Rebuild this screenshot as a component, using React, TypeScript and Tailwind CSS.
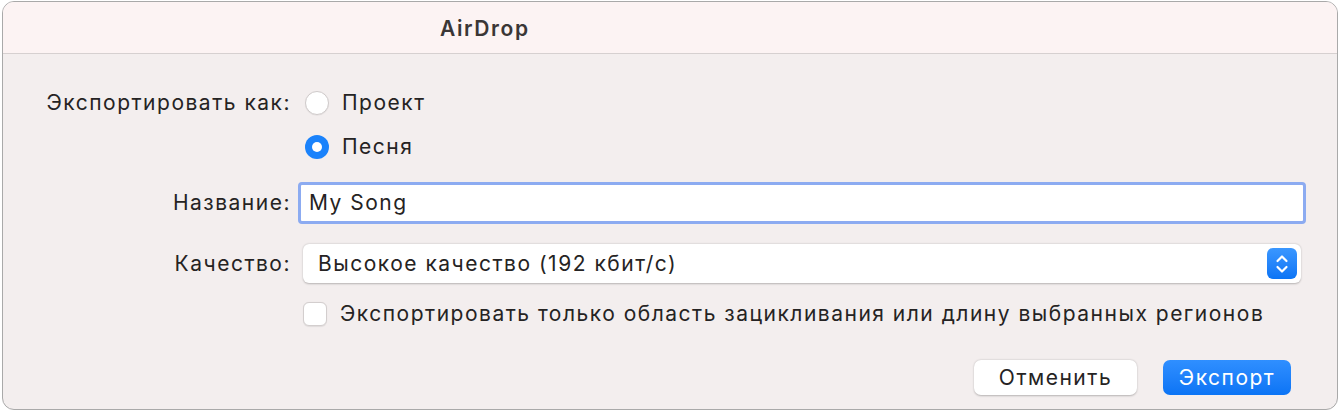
import React from "react";

export default function App() {
  const font = { fontFamily: "Inter, 'Noto Sans', sans-serif" };
  return (
    <div className="w-[1341px] h-[412px] bg-white pt-[1px] pl-[2px] pr-[3px] pb-[2px]" style={font}>
      <div className="w-full h-full rounded-[12px] border border-[#a9a9a9] overflow-hidden bg-[#f3eeee] flex flex-col">
        <div className="h-[52px] shrink-0 bg-[#fcf3f3] border-b border-[#d6d0d0] flex items-center pl-[437px] pt-[3px]">
          <span className="text-[21px] font-semibold text-[#3a3636] tracking-[1.6px]">AirDrop</span>
        </div>
        <div className="flex-1 flex flex-col text-[21px] tracking-[1.5px] text-[#252323]">
          <div className="grid grid-cols-[288px_1fr] items-center gap-x-[10px] mt-[37px]">
            <div className="text-right h-[24px] leading-[24px]">Экспортировать как:</div>
            <div className="flex items-center gap-[13px] pl-[4px] h-[24px]">
              <span className="w-[24px] h-[24px] rounded-full bg-white border border-[#cfcaca] shadow-[0_0.5px_1px_rgba(0,0,0,0.08)]"></span>
              <span>Проект</span>
            </div>
            <div></div>
            <div className="flex items-center gap-[13px] pl-[4px] mt-[20px] h-[24px]">
              <span className="w-[24px] h-[24px] rounded-full bg-[#1a82fb] flex items-center justify-center">
                <span className="w-[10px] h-[10px] rounded-full bg-white"></span>
              </span>
              <span>Песня</span>
            </div>
            <div className="text-right mt-[23px]">Название:</div>
            <div className="mt-[23px] mr-[31px] rounded-[4px] border-[3.5px] border-[#8cabf1] bg-white h-[42px] flex items-center pl-[8px] ml-[-3px]">
              <span>My Song</span>
            </div>
            <div className="text-right mt-[20px]">Качество:</div>
            <div className="mt-[20px] mr-[36px] ml-[2px] h-[39px] bg-white rounded-[6px] shadow-[0_0.5px_2px_rgba(0,0,0,0.25)] flex items-center justify-between pl-[15px] pr-[4px]">
              <span>Высокое качество (192 кбит/с)</span>
              <span className="w-[30px] h-[31px] rounded-[6px] bg-gradient-to-b from-[#3a97ff] to-[#0a74f5] flex items-center justify-center">
                <svg width="14" height="22" viewBox="0 0 14 22" fill="none" stroke="white" strokeWidth="2.2" strokeLinecap="round" strokeLinejoin="round">
                  <path d="M2.5 8 L7 3.5 L11.5 8" />
                  <path d="M2.5 14 L7 18.5 L11.5 14" />
                </svg>
              </span>
            </div>
            <div></div>
            <div className="mt-[19px] flex items-center gap-[13px] pl-[2px] h-[24px]">
              <span className="w-[24px] h-[24px] rounded-[6px] bg-white border border-[#d3cece] shadow-[0_0.5px_1px_rgba(0,0,0,0.08)]"></span>
              <span>Экспортировать только область зацикливания или длину выбранных регионов</span>
            </div>
          </div>
          <div className="flex justify-end gap-[26px] mt-[34px] pr-[46px]">
            <button className="w-[163px] h-[35px] bg-white rounded-[7px] shadow-[0_0.5px_2px_rgba(0,0,0,0.25)] text-[#252323] text-[21px] tracking-[1.5px]">Отменить</button>
            <button className="w-[128px] h-[35px] rounded-[7px] bg-gradient-to-b from-[#2f8fff] to-[#0a74f5] text-white text-[21px] tracking-[1.5px]">Экспорт</button>
          </div>
        </div>
      </div>
    </div>
  );
}
